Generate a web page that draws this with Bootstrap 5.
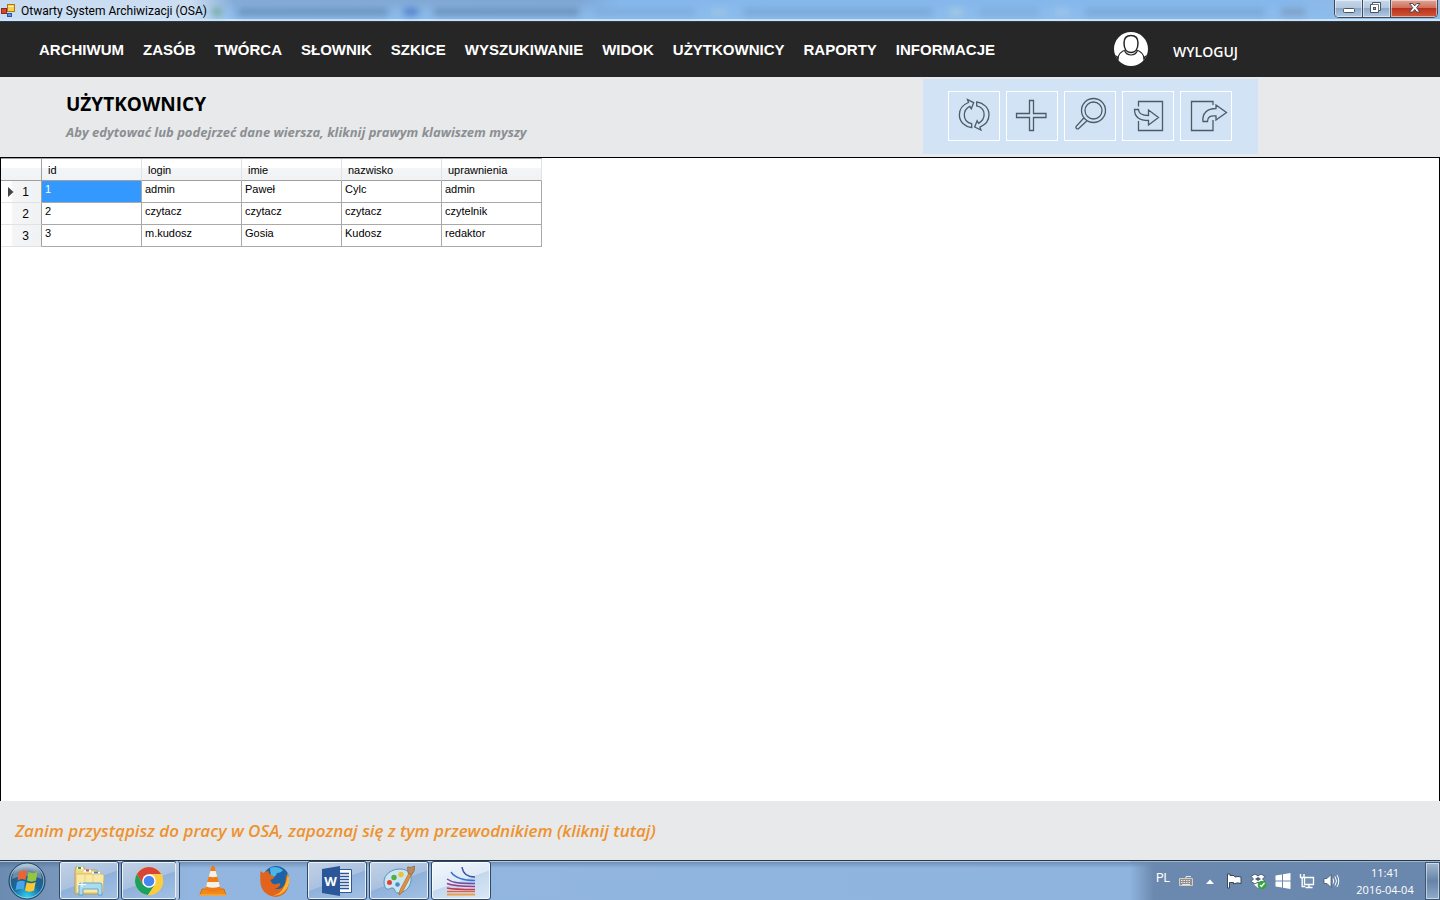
<!DOCTYPE html>
<html lang="pl">
<head>
<meta charset="utf-8">
<meta name="viewport" content="width=device-width, initial-scale=1">
<title>Otwarty System Archiwizacji (OSA)</title>
<link href="https://cdn.jsdelivr.net/npm/bootstrap@5.3.0/dist/css/bootstrap.min.css" rel="stylesheet">
<style>
  :root { --ui: "Open Sans", "Noto Sans", sans-serif; --grid: "Liberation Sans", Arial, sans-serif; }
  body { font-family: var(--ui); background: #e7e9ea; color: #000; }
  button { font-family: inherit; }
  svg { display: block; flex: none; }

  /* window caption */
  .caption { height: 22px; padding-left: 1px; border-bottom: 1px solid #2e3a48;
    background:
      linear-gradient(rgba(255,255,255,0) 19px, #cfe4f7 19px),
      linear-gradient(90deg, rgba(222,234,247,.75) 0, rgba(222,234,247,.8) 190px, rgba(222,234,247,0) 235px),
      linear-gradient(rgba(120,165,215,0), #8cbdec 90%),
      linear-gradient(90deg, #86acd8 0, #7fa6d3 580px, #85b7ec 620px, #85b7ec 1290px, #a4bcd9 100%); }
  .caption-title { font: 12px/22px Roboto, sans-serif; }
  .ghost-tabs { left: 212px; right: 110px; top: 8px; height: 9px; filter: blur(3px); opacity: .6; }
  .ghost-tabs i { height: 8px; }
  .win-btns { border: 1px solid #3b4c60; border-top: 0; border-radius: 0 0 5px 5px; margin-right: 2px; height: 18px; overflow: hidden; }
  .win-btns button { border: 0; border-right: 1px solid #3b4c60; padding: 0; height: 17px; width: 28px;
    background: linear-gradient(#c6d8eb 0, #b3c8df 45%, #8ea9c7 50%, #b0cae4 100%); box-shadow: inset 0 0 0 1px rgba(255,255,255,.5); }
  .win-btns .win-close { width: 46px; border-right: 0; background: linear-gradient(#e0a497 0, #cf6f5b 45%, #b8321b 50%, #d2583a 100%); }

  /* main menu */
  .menu-bar { min-height: 55px; background: #262626; padding: 0 202px 0 39px; }
  .menu-bar .menu { column-gap: 19px; }
  .menu a { font: bold 15px/20px var(--grid); color: #fff; text-decoration: none; }
  .account { column-gap: 25px; }
  .account svg { margin-bottom: 2px; }
  .account button { border: 0; background: none; padding: 5px 0 0; color: #fff; font-size: 14px; font-weight: 600; line-height: 20px; }

  /* page heading with tool buttons */
  .page-head { min-height: 80px; padding: 2px 182px 3px 66px; }
  .page-head h1 { font-size: 19px; line-height: 24px; font-weight: 700; margin: 0 0 6px; }
  .page-head p { font-size: 13px; line-height: 20px; font-weight: 700; font-style: italic; color: #8b8f93; margin: 0; }
  .tools { background: #d2e3f5; padding: 12px 26px 13px 25px; gap: 6px; }
  .tools button { width: 52px; height: 50px; padding: 0; border: 1px solid #fff; background: none; }
  .tools svg { fill: none; stroke: #4d5a68; stroke-width: 1.3; stroke-linejoin: miter; }

  /* data grid */
  .grid-pane { background: #fff; border: 1px solid #000; border-bottom: 0; }
  .users { border-collapse: separate; border-spacing: 0; table-layout: fixed; width: 541px; font: 11px/14px var(--grid); border-top: 1px solid #a0a0a0; }
  .users th, .users td { height: 22px; border: 0 solid #a9a9a9; border-width: 0 1px 1px 0; padding: 1px 3px 0; vertical-align: top; font-weight: 400; }
  .users thead th { border-right-color: #e0e2e4; border-bottom-color: #a0a0a0; padding: 4px 6px 0; background: linear-gradient(#fff 40%, #f4f5f7 45%, #f1f2f4); }
  .users thead th:first-child, .users tbody th { border-right-color: #a0a0a0; }
  .users tbody th { border-bottom-color: #e0e2e4; padding: 4px 12px 0 7px; font-size: 12px; background: linear-gradient(90deg, #fff 25%, #f4f5f7 30%, #f1f2f4); }
  .users .picked { background: #3399ff; color: #fff; }
  .w-head { width: 41px; }

  .guide { min-height: 59px; padding: 0 15px; }
  .guide a { font-size: 17px; line-height: 24px; font-weight: 600; font-style: italic; color: #ee922e; text-decoration: none; }

  /* taskbar */
  .taskbar { height: 40px; border-top: 1px solid #25384c; overflow: hidden;
    background: linear-gradient(rgba(60,85,120,.45), rgba(60,85,120,0) 7px), linear-gradient(90deg, #6c8bb0 0, #7896bb 56px, #92b6df 190px, #8fb4de 1100px, #92b6df 100%); box-shadow: inset 0 1px 0 #b4c8dd; }
  .taskbar button { border: 0; padding: 0; background: none; }
  .slots { gap: 2px; }
  .slots button { width: 60px; height: 39px; display: grid; place-items: center; border: 1px solid transparent; border-radius: 3px; }
  .slots .open { border-color: #304a66; box-shadow: inset 0 0 0 1px rgba(255,255,255,.75); background: linear-gradient(160deg, #c3d2e6 0, #a9c1df 50%, #8fb1da 51%, #a3c1e4 100%); }
  .slots .front { background: linear-gradient(160deg, #f2f7fc 0, #dfeaf6 50%, #c3d8ee 51%, #dbe8f6 100%); }
  .slots .stacked { width: 56px; }
  .stack-edge { width: 4px; height: 39px; margin: 0 1px 0 -3px; border-right: 1px solid #304a66; background: #b4c8e2; border-radius: 0 3px 3px 0; }
  .start { width: 54px; display: grid; place-items: center; margin-right: 5px; }
  .tray { padding-left: 26px; color: #fff; background: linear-gradient(90deg, rgba(105,135,173,0), #6b89ae 24px, #6a88ad); border-top: 1px solid #9fb5ce; }
  .lang { font: 12px/16px Roboto, sans-serif; margin-right: 8px; margin-bottom: 6px; }
  .tray-icons { gap: 8px; margin-right: 13px; }
  .clock { width: 64px; font-size: 11px; line-height: 17px; margin-right: 8px; padding-bottom: 1px; }
  .taskbar .peek { width: 15px; border: 1px solid #3d5672; box-shadow: inset 0 0 0 1px rgba(255,255,255,.5); background: linear-gradient(#a3b6cd, #6583a8 50%, #8fabca); }
</style>
</head>
<body class="d-flex flex-column min-vh-100">

<header class="caption d-flex align-items-start position-relative">
  <div class="ghost-tabs position-absolute d-flex gap-3" aria-hidden="true">
    <i style="width:10px;background:#5f9a78"></i><i style="width:150px;background:#5c80ab"></i><i style="width:14px;background:#3567c0"></i><i style="width:145px;background:#5d7fa8"></i><i style="width:100px;background:#78a6d8"></i><i style="width:16px;background:#a4c8e2"></i><i style="width:190px;background:#729fcd"></i><i style="width:14px;background:#b3cfdd"></i><i style="width:60px;background:#7aa7d6"></i><i style="width:14px;background:#a8c8e6"></i><i style="width:180px;background:#729fcd"></i><i style="width:24px;background:#7891b0"></i>
  </div>
  <svg class="position-relative mt-1 me-1" width="16" height="14" viewBox="0 0 16 14">
    <rect x=".5" y="4.500" width="5" height="5" fill="#d8452f" stroke="#8a2b1f"/><rect x="6.500" y=".5" width="7" height="7" fill="#fbd04a" stroke="#a8781b"/><rect x="6.500" y="9.500" width="4" height="3" fill="#5f8fe6" stroke="#2f56a5"/>
    <path d="M7.500 2.500h5" stroke="#fff3b8"/>
  </svg>
  <span class="caption-title position-relative">Otwarty System Archiwizacji (OSA)</span>
  <div class="win-btns d-flex ms-auto position-relative">
    <button aria-label="Minimalizuj"><svg width="28" height="17" viewBox="0 0 28 17"><rect x="8.500" y="8.500" width="11" height="4" rx="1" fill="#fff" stroke="#4b5566"/></svg></button>
    <button aria-label="Przywróć"><svg width="27" height="17" viewBox="0 0 27 17"><path d="M9.500 2.500h8v8h-2v2h-8v-8h2z" fill="#fff" stroke="#4b5566"/><path d="M9.500 4.500h6v6" fill="none" stroke="#4b5566" stroke-width=".8"/><rect x="10.500" y="7.500" width="2" height="2" fill="#9db4d0" stroke="#4b5566"/></svg></button>
    <button class="win-close" aria-label="Zamknij"><svg width="46" height="17" viewBox="0 0 46 17"><path d="M18.500 3.500h3.200l2 2.400 2-2.400h3.200l-3.300 4.200 3.300 4.300h-3.200l-2-2.500-2 2.500h-3.200l3.300-4.300z" fill="#fff" stroke="#4b4a5a"/></svg></button>
  </div>
</header>

<nav class="menu-bar d-flex align-items-center">
  <div class="menu d-flex flex-wrap">
    <a href="#">ARCHIWUM</a><a href="#">ZASÓB</a><a href="#">TWÓRCA</a><a href="#">SŁOWNIK</a><a href="#">SZKICE</a><a href="#">WYSZUKIWANIE</a><a href="#">WIDOK</a><a href="#">UŻYTKOWNICY</a><a href="#">RAPORTY</a><a href="#">INFORMACJE</a>
  </div>
  <div class="account d-flex align-items-center ms-auto">
    <svg width="34" height="34" viewBox="0 0 34 34"><defs><clipPath id="face"><circle cx="17" cy="17" r="17"/></clipPath></defs>
      <circle cx="17" cy="17" r="17" fill="#fff"/>
      <g clip-path="url(#face)"><path d="M4 30V27C4 21 8 19 12.500 17.500M30 30V27C30 21 26 19 21.500 17.500" fill="none" stroke="#262626" stroke-width="1.200"/><path d="M0 22L4.300 25 4 34H0zM34 22L29.700 25 30 34H34z" fill="#262626"/>
      <path d="M10.500 18.500C13 24.500 21 24.500 23.500 18.500" fill="none" stroke="#262626" stroke-width="1.200"/>
      <path d="M17 3.500c5 0 7 3 7 7.500 0 5.500-2.500 9.500-7 9.500s-7-4-7-9.500c0-4.500 2-7.500 7-7.500z" fill="#fff" stroke="#262626" stroke-width="1.500"/></g></svg>
    <button>WYLOGUJ</button>
  </div>
</nav>

<section class="page-head d-flex align-items-center">
  <div>
    <h1>UŻYTKOWNICY</h1>
    <p>Aby edytować lub podejrzeć dane wiersza, kliknij prawym klawiszem myszy</p>
  </div>
  <div class="tools d-flex ms-auto">
    <button aria-label="Odśwież"><svg width="50" height="48" viewBox="0 0 50 48"><defs><path id="half-turn" d="M22.700 35.700C15.700 34.500 10.400 29.800 10.400 23C10.400 17 14 12.600 19.500 10.500L18.500 7.600L24.700 10.600L22.300 16.800L20.800 14.300C17.500 16 15.300 19 15.300 23C15.300 27.500 18.300 30.800 22.700 31.700z"/></defs><use href="#half-turn"/><use href="#half-turn" transform="rotate(180 25.200 22.800)"/></svg></button>
    <button aria-label="Dodaj"><svg width="50" height="48" viewBox="0 0 50 48"><path d="M22.500 8.500h4v13h12.500v4H26.500v13h-4v-13H9.500v-4h13z"/></svg></button>
    <button aria-label="Szukaj"><svg width="50" height="48" viewBox="0 0 50 48"><circle cx="28.500" cy="18.500" r="12"/><circle cx="28.500" cy="18.500" r="8.500"/><path d="M18.800 26l-7.600 8.300c-1.200 1.600 1 3.400 2.500 2.200l8.500-8"/></svg></button>
    <button aria-label="Importuj"><svg width="50" height="48" viewBox="0 0 50 48"><path d="M15.500 14.500v-5h24v29h-24v-9.500"/><path d="M11.500 17.500h4c0 4 3 6 10 6v-5.500l10 7.500-10 7.500v-4.500c-9 0-14-3-14-11z"/></svg></button>
    <button aria-label="Eksportuj"><svg width="50" height="48" viewBox="0 0 50 48"><path d="M32 13v-3.500H10.500v29H32V28"/><path d="M22 29.500c-1-8 4-13 13-13v-3.500l10.500 7.500-10.500 7.500v-4c-6-.5-8.500 1-8.500 5.500z"/></svg></button>
  </div>
</section>

<main class="grid-pane flex-grow-1">
  <table class="users">
    <colgroup><col class="w-head"><col><col><col><col><col></colgroup>
    <thead><tr><th></th><th scope="col">id</th><th scope="col">login</th><th scope="col">imie</th><th scope="col">nazwisko</th><th scope="col">uprawnienia</th></tr></thead>
    <tbody>
      <tr><th scope="row"><span class="d-flex align-items-center justify-content-between"><svg width="6" height="10" viewBox="0 0 6 10"><path d="M0 0l5.500 5L0 10z" fill="#444"/></svg>1</span></th><td class="picked">1</td><td>admin</td><td>Paweł</td><td>Cylc</td><td>admin</td></tr>
      <tr><th scope="row" class="text-end">2</th><td>2</td><td>czytacz</td><td>czytacz</td><td>czytacz</td><td>czytelnik</td></tr>
      <tr><th scope="row" class="text-end">3</th><td>3</td><td>m.kudosz</td><td>Gosia</td><td>Kudosz</td><td>redaktor</td></tr>
    </tbody>
  </table>
</main>

<section class="guide d-flex align-items-center">
  <a href="#">Zanim przystąpisz do pracy w OSA, zapoznaj się z tym przewodnikiem (kliknij tutaj)</a>
</section>

<footer class="taskbar d-flex">
  <button class="start" aria-label="Start"><svg width="38" height="38" viewBox="0 0 38 38">
    <defs><radialGradient id="orb" cx=".5" cy=".95" r=".9"><stop offset="0" stop-color="#35d3f5"/><stop offset=".45" stop-color="#14699f"/><stop offset=".8" stop-color="#2d587f"/><stop offset="1" stop-color="#9fb9cf"/></radialGradient></defs>
    <circle cx="19" cy="19" r="18" fill="url(#orb)" stroke="#1e3f60"/><circle cx="19" cy="19" r="16.800" fill="none" stroke="#a9cbe2" stroke-width=".8"/>
    <path d="M4 17C5 7 12 3 19 3s14 4 15 14c-9-4-21-4-30 0z" fill="#fff" opacity=".3"/>
    <path d="M11 10c3-2 5-2 8-.5L17.500 18c-3-1.500-5-1.200-8 .5z" fill="#ee6430"/><path d="M20.500 10c3 1.500 5.500 1.500 9 0L28 18.500c-3 1.500-6 1.500-9 0z" fill="#93c83e"/>
    <path d="M9 20c3-1.700 5.500-1.800 8-.4L15.500 28c-2.500-1.500-5-1.300-8 .3z" fill="#4ba3e8"/><path d="M18.700 20.200c3 1.500 6 1.500 9-.2L26 28.500c-3 1.500-6 1.500-9 0z" fill="#fdc72f"/></svg></button>
  <div class="slots d-flex">
    <button class="open" aria-label="Eksplorator"><svg width="34" height="32" viewBox="0 0 34 32"><path d="M3 6l1-4h8l1 3h12l2 2v22H3z" fill="#f0d985" stroke="#b99a44" stroke-width=".8"/><path d="M5 3h6M12 6h7M20 8h8" stroke="#fff" stroke-width="2.500"/><path d="M6 3h3" stroke="#2fa23a" stroke-width="2"/><path d="M14 5.500h3" stroke="#d54a35" stroke-width="2"/><path d="M22 7.500h4" stroke="#3c86c8" stroke-width="2"/><path d="M4 9h27l1 2-1 17H4z" fill="#f8e9a6" stroke="#ccb060" stroke-width=".7"/><path d="M13 10v10M21 10v10" stroke="#ead384"/><path d="M7 30V20q0-2 2-2h19q2 0 2 2v10h-4v-6H11v6z" fill="#a9dcf1" stroke="#5199c0" stroke-width=".8"/><path d="M10 17v5M6 19.500h8" stroke="#fff"/></svg></button>
    <button class="open stacked" aria-label="Chrome"><svg width="30" height="30" viewBox="0 0 30 30"><circle cx="15" cy="15" r="14" fill="#fbcd3c"/><path d="M2.880 8A14 14 0 0 1 27.120 8L15 8 8.900 18.500z" fill="#da4437"/><path d="M2.880 8A14 14 0 0 0 14 28.970L21 18.500 15 21 8.900 18.500z" fill="#1aa15f"/><path d="M15 8h12.120A14 14 0 0 1 14 29l7-10.500z" fill="#fbcd3c"/><circle cx="15" cy="15" r="6.800" fill="#fff"/><circle cx="15" cy="15" r="5.300" fill="#4587f0"/></svg></button>
    <span class="stack-edge"></span>
    <button aria-label="VLC"><svg width="30" height="32" viewBox="0 0 30 32"><path d="M4 24h22l2 6H2z" fill="#f28a1a" stroke="#c96508" stroke-width=".8"/><path d="M13.500 1.500q1.500-1.500 3 0L23 25q-8 4-16 0z" fill="#f47a12"/><path d="M12.300 6h5.400l1.600 5.500q-4 1.500-8.600 0zM9.200 17h11.600l1.200 4.500q-7 2.500-14 0z" fill="#f1f1ee"/><path d="M2 30h26" stroke="#f9ae3e" stroke-width="1.500"/></svg></button>
    <button aria-label="Firefox"><svg width="32" height="32" viewBox="0 0 32 32"><circle cx="17" cy="14" r="13" fill="#1c62a4"/><path d="M11 3q7-3 13 2-2 3-6 3-1 4-6 5z" fill="#4db4e8"/><path d="M1.500 6q2 1.500 3 2 2-2 5-2 0 3 3 4.500 3 0 3 1.500-1 2-4 3 1 5 6 4 3-1.500 4 .5-2 4-6 4 7 2 10-4 2-6 1-10 3 3 3.500 8-1 13-13.500 14.500Q3 30 1.500 18q-.5-7 0-12z" fill="#e2631c"/><path d="M28.500 8q4.500 10-2.500 18-5 5-12 4.500 8-2 10.500-8 4-6 4-14.500z" fill="#fbb42d"/></svg></button>
    <button class="open" aria-label="Word"><svg width="32" height="32" viewBox="0 0 32 32"><path d="M17 4.500h13.500v23H17z" fill="#fff" stroke="#2b579a"/><path d="M19 8.500h9M19 11.500h9M19 14.500h9M19 17.500h9M19 20.500h9M19 23.500h9" stroke="#2b579a" stroke-width="1.500"/><path d="M1 4L19 1v30L1 28z" fill="#2b579a"/><text x="9.500" y="20.500" text-anchor="middle" font-family="Open Sans, sans-serif" font-weight="700" font-size="13" fill="#fff">W</text></svg></button>
    <button class="open" aria-label="Paint"><svg width="34" height="32" viewBox="0 0 34 32"><path d="M2 17C2 9 10 4 18 4s12 5 11 12-7 12-13 12c-4 0-2-4-5-5-3-.5-4 2-6 1s-3-4-3-7z" fill="#c9e6f5" stroke="#5d92b5"/><circle cx="7.500" cy="17.500" r="2.500" fill="#e5402f"/><circle cx="12" cy="12.500" r="2.700" fill="#56ad3d"/><circle cx="19" cy="9.500" r="2.700" fill="#f5be2e"/><circle cx="15.500" cy="19.500" r="2.300" fill="#4a8bc7"/><path d="M17 30q0-3 1.500-6L27 8l2.500 1.500L21 26q-2 3-4 4z" fill="#e4913f" stroke="#a4601d" stroke-width=".6"/><path d="M26 8l-.500-6q4 1 7-1 1 5-3 9z" fill="#b98a5c" stroke="#7e5733" stroke-width=".6"/></svg></button>
    <button class="open front" aria-label="OSA"><svg width="30" height="30" viewBox="0 0 30 30" fill="none" stroke-width="1.400"><path d="M16 1c1 7 5 10 13 10" stroke="#3d4fa0"/><path d="M5 6c4 6 11 8.500 24 8.500" stroke="#3474d0"/><path d="M1 13c5 3.500 10 4.500 28 4.500" stroke="#6a4aa5"/><path d="M1 17.500c6 2.500 12 3 28 3" stroke="#a13a80"/><path d="M1 22c7 1.500 14 1.500 28 1.500" stroke="#c03a4b"/><path d="M1 25.500h28" stroke="#e05a50"/><path d="M1 28.500h28" stroke="#ef9e43" stroke-width="2"/></svg></button>
  </div>

  <div class="tray d-flex ms-auto align-items-center">
    <span class="lang">PL</span>
    <div class="tray-icons d-flex align-items-center">
      <svg width="16" height="16" viewBox="0 0 16 16"><path d="M1.500 5.500h13v7h-13z" fill="#8d8f90" stroke="#d5cdc3"/><path d="M3 7.500h10M3 9.500h10" stroke="#eee7dd" stroke-dasharray="1.500 1"/><path d="M4 11.500h8M8 5V3.500h5" stroke="#eee7dd" fill="none"/></svg>
      <svg width="16" height="16" viewBox="0 0 16 16"><path d="M8 6.500l4 4.500H4z" fill="#fff"/></svg>
      <svg width="16" height="16" viewBox="0 0 16 16"><path d="M1.500 1v14h2V9.500h4v1.500q4-2 7.500-.5V4q-3-1-6 0l-1-1.500h-4V1z" fill="#fff" stroke="#2c3b4e" stroke-width=".9"/></svg>
      <svg width="17" height="17" viewBox="0 0 17 17"><path d="M5 1l3 2 3-2 4 2.500-2.500 2.500 2.500 2.500-4 2.500-3-2-3 2L1 8.500 3.500 6 1 3.500z" fill="#fff" stroke="#34465c" stroke-width=".8"/><path d="M8 4L5 6l3 2 3-2z" fill="#4a5d75"/><path d="M4 11.500l4-1.500 4 1.500L8 15z" fill="#fff"/><circle cx="12" cy="12" r="4.300" fill="#35a63f"/><path d="M10 12l1.500 1.500L14.500 10" stroke="#fff" stroke-width="1.300" fill="none"/></svg>
      <svg width="16" height="16" viewBox="0 0 16 16"><path d="M.5 2.500L7 1.500v6H.5zM8 1.300L15.500 0v7.500H8zM.5 8.500H7v6l-6.500-1zM8 8.500h7.500V16L8 14.700z" fill="#fff"/></svg>
      <svg width="16" height="16" viewBox="0 0 16 16"><path d="M5.500 4.500h9v7h-9z" fill="#7190b2" stroke="#fff" stroke-width="1.300"/><path d="M10 12v2M6.500 14.500h7M1.500 1v3.500h3.500V1M3.200 4.500v9h3" fill="none" stroke="#fff" stroke-width="1.400"/></svg>
      <svg width="17" height="16" viewBox="0 0 17 16"><path d="M1 5.500h3L8 1.500v13l-4-4H1z" fill="#fff" stroke="#33465c" stroke-width=".7"/><path d="M10 5.500q1.500 2.500 0 5M12 3.500q3 4.500 0 9M14 2q3.500 6 0 12" fill="none" stroke="#fff"/></svg>
    </div>
    <div class="clock text-center">11:41<br>2016-04-04</div>
    <button class="peek align-self-stretch" aria-label="Pokaż pulpit"></button>
  </div>
</footer>

<script src="https://cdn.jsdelivr.net/npm/bootstrap@5.3.0/dist/js/bootstrap.bundle.min.js"></script>
</body>
</html>
